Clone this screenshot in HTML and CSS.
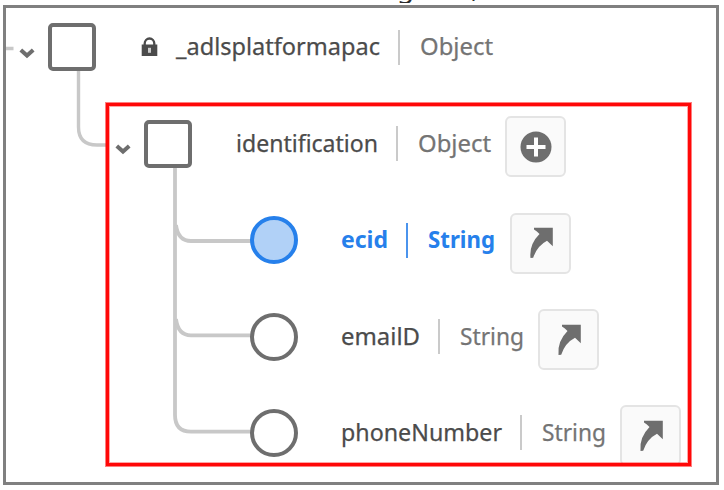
FILE: index.html
```html
<!DOCTYPE html>
<html lang="en">
<head>
<meta charset="utf-8">
<title>Schema structure</title>
<link rel="stylesheet" href="styles.css">
</head>
<body>
<svg width="0" height="0" class="defs" aria-hidden="true">
  <symbol id="chevron" viewBox="0 0 16 11"><path d="M1.8 2 L8 7.6 L14.2 2" fill="none" stroke="#6e6e6e" stroke-width="4"/></symbol>
  <symbol id="arrow" viewBox="0 0 24 32"><path d="M5 .8H23.8V19.2L18 13.8Q8 19 4.2 30.8L1.5 31Q0 17.5 10.5 7Q8 4 5 2.5Z" fill="#6e6e6e"/></symbol>
</svg>
<div class="caption">g<span class="descender">,</span></div>
<main class="schema">
  <svg class="lines" width="724" height="490" viewBox="0 0 724 490">
    <path d="M6 48.5H13.5M78.5 70V127Q78.5 145 97 145H108" stroke-width="3.4"/>
    <path d="M175 167V415Q175 431.7 191 431.7H252" stroke-width="3.8"/>
    <path d="M176 225Q178 241 191 241H252M176 319Q178 335.3 191 335.3H252" stroke-width="3.8"/>
  </svg>
  <div class="row root">
    <svg class="chevron"><use href="#chevron"/></svg><span class="square"></span>
    <svg class="lock" viewBox="0 0 17 20"><path d="M3.7 8V6.5a4.8 5 0 0 1 9.6 0V8" fill="none" stroke="#4b4b4b" stroke-width="2.3"/><path d="M.7 7.5H16.3V19H.7z" fill="#4b4b4b"/><path d="M7 10.8h3v5H7z" fill="#ccc"/></svg>
    <svg class="label" width="204" height="36"><text x="0" y="26" textLength="204" lengthAdjust="spacingAndGlyphs">_adlsplatformapac</text></svg>
    <i class="divider"></i>
    <svg class="label type" width="73" height="36"><text x="0" y="26" textLength="73" lengthAdjust="spacingAndGlyphs">Object</text></svg>
  </div>
  <div class="row group">
    <svg class="chevron"><use href="#chevron"/></svg><span class="square"></span>
    <svg class="label" width="142" height="36"><text x="0" y="26" textLength="142" lengthAdjust="spacingAndGlyphs">identification</text></svg>
    <i class="divider"></i>
    <svg class="label type" width="73" height="36"><text x="0" y="26" textLength="73" lengthAdjust="spacingAndGlyphs">Object</text></svg>
    <span class="button"><svg width="32" height="32" viewBox="0 0 32 32"><circle cx="16" cy="16" r="15.5" fill="#6e6e6e"/><path d="M16 6.5V25.5M6.5 16H25.5" stroke="#fff" stroke-width="4"/></svg></span>
  </div>
  <div class="row leaf selected">
    <span class="circle"></span>
    <svg class="label" width="47" height="36"><text x="0" y="26" textLength="47" lengthAdjust="spacingAndGlyphs">ecid</text></svg>
    <i class="divider"></i>
    <svg class="label type" width="67" height="36"><text x="0" y="26" textLength="67" lengthAdjust="spacingAndGlyphs">String</text></svg>
    <span class="button"><svg width="24" height="32"><use href="#arrow"/></svg></span>
  </div>
  <div class="row leaf">
    <span class="circle"></span>
    <svg class="label" width="79" height="36"><text x="0" y="26" textLength="79" lengthAdjust="spacingAndGlyphs">emailD</text></svg>
    <i class="divider"></i>
    <svg class="label type" width="64" height="36"><text x="0" y="26" textLength="64" lengthAdjust="spacingAndGlyphs">String</text></svg>
    <span class="button"><svg width="24" height="32"><use href="#arrow"/></svg></span>
  </div>
  <div class="row leaf">
    <span class="circle"></span>
    <svg class="label" width="161" height="36"><text x="0" y="26" textLength="161" lengthAdjust="spacingAndGlyphs">phoneNumber</text></svg>
    <i class="divider"></i>
    <svg class="label type" width="64" height="36"><text x="0" y="26" textLength="64" lengthAdjust="spacingAndGlyphs">String</text></svg>
    <span class="button"><svg width="24" height="32"><use href="#arrow"/></svg></span>
  </div>
</main>
<div class="highlight"></div>
</body>
</html>
```
FILE: styles.css
```css
* { box-sizing: border-box; }
body { margin: 0; width: 724px; height: 490px; padding: 5px 5px 5px 3px; background: #fff; overflow: hidden; position: relative; font-family: "Noto Sans", sans-serif; }
.defs { position: absolute; }
.caption { position: absolute; left: 397px; top: -31px; height: 34px; overflow: hidden; font-size: 28px; line-height: 34px; color: #2c2c2c; }
.descender { margin-left: 57px; }
.schema { width: 716px; height: 480px; border: 3px solid #808080; }
.lines { position: absolute; left: 0; top: 0; fill: none; stroke: #c8c8c8; }
.row { position: relative; display: flex; align-items: center; height: 96.3px; }
.root { height: 78px; padding-left: 13px; margin-bottom: 9.8px; }
.group { padding-left: 109px; }
.leaf { padding-left: 244px; }
.chevron { width: 16px; height: 11px; margin: 12px 13px 0 0; flex: none; }
.square { width: 48px; height: 48px; border: 4px solid #6e6e6e; border-radius: 5px; background: #fff; flex: none; }
.circle { width: 48px; height: 48px; border: 4px solid #6e6e6e; border-radius: 50%; background: #fff; margin-right: 43px; flex: none; }
.lock { width: 17px; height: 20px; margin: 0 18px 0 45px; flex: none; }
.group .square { margin-right: 44px; }
.label { flex: none; overflow: visible; font-size: 24px; fill: #4b4b4b; stroke: #4b4b4b; stroke-width: .25px; }
.type { fill: #747474; stroke: #747474; }
.divider { width: 2px; height: 35px; background: #cacaca; margin: 0 20px 0 18px; flex: none; }
.button { width: 61px; height: 61px; margin: 6px 0 0 14px; border: 2px solid #e4e4e4; border-radius: 6px; background: #fafafa; display: flex; align-items: center; justify-content: center; flex: none; }
.selected .button { margin-left: 15px; }
.selected .circle { border-color: #2680eb; background: #b1d1f7; }
.selected .label { fill: #2680eb; stroke: none; font-weight: 700; }
.selected .divider { background: #4b94ed; }
.highlight { position: absolute; left: 106px; top: 103px; width: 585px; height: 363px; border: 3px solid #ff0808; box-shadow: 0 0 0 1px rgba(255,0,0,.5), inset 0 0 0 1px rgba(255,0,0,.35); }
```
